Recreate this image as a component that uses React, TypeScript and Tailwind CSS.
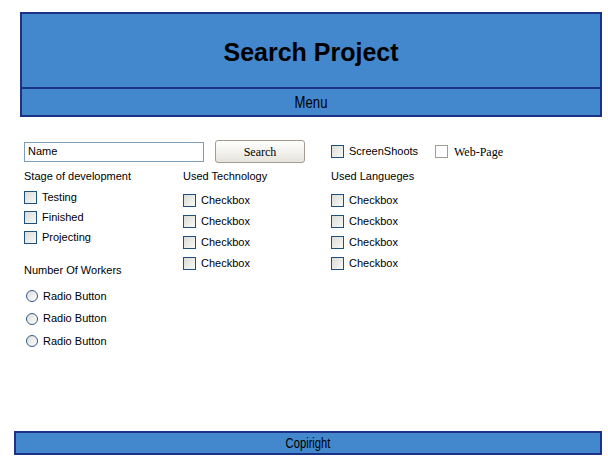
import React from "react";

const SANS = "font-['Liberation_Sans',Arial,sans-serif]";
const SERIF = "font-['Liberation_Serif','Times_New_Roman',serif]";

function Box({ muted }: { muted?: boolean }) {
  return (
    <span
      className={
        "inline-block w-[13px] h-[13px] shrink-0 border " +
        (muted
          ? "border-[#a39d8f] bg-white"
          : "border-[#1c5180] bg-gradient-to-br from-[#dcdcd7] to-[#f8f8f5]")
      }
    />
  );
}

function Check({ label, h = "h-[21px]" }: { label: string; h?: string }) {
  return (
    <div className={"flex items-center gap-[5px] " + h}>
      <Box />
      <span className="text-[11px] text-black leading-none">{label}</span>
    </div>
  );
}

function Radio({ label, h }: { label: string; h: string }) {
  return (
    <div className={"flex items-center gap-[5px] pl-[2px] " + h}>
      <span className="inline-block w-[12px] h-[12px] rounded-full border border-[#2f5d8a] bg-gradient-to-br from-[#dcdcd7] to-white" />
      <span className="text-[11px] text-black leading-none">{label}</span>
    </div>
  );
}

export default function App() {
  return (
    <div className={"w-[608px] h-[467px] flex flex-col bg-white text-black pb-[12px] " + SANS}>
      <header className="ml-[20px] pt-[12px] w-[582px]">
        <div className="border-2 border-[#1b3286] bg-[#4387cc]">
          <div className="h-[73px] pt-[3px] flex items-center justify-center">
            <h1 className="text-[25px] font-bold leading-none">Search Project</h1>
          </div>
          <div className="h-[28px] pt-[2px] border-t-2 border-[#1b3286] flex items-center justify-center">
            <span className="inline-block text-[16px] leading-none scale-x-[0.82]">Menu</span>
          </div>
        </div>
      </header>

      <div className="pl-[24px] mt-[23px]">
        <div className="flex items-center h-[23px]">
          <div className="w-[180px] h-[20px] border border-[#7f9db9] flex items-center px-[3px] text-[11px]">
            Name
          </div>
          <button
            className={
              "ml-[11px] w-[90px] h-[23px] rounded-[3px] border border-[#a49d8f] bg-gradient-to-b from-white to-[#e6e4dc] text-[12px] " +
              SERIF
            }
          >
            Search
          </button>
          <div className="ml-[26px] w-[104px] flex items-center gap-[5px]">
            <Box />
            <span className="text-[11px] leading-none">ScreenShoots</span>
          </div>
          <div className="flex items-center gap-[6px]">
            <Box muted />
            <span className={"text-[12px] leading-none " + SERIF}>Web-Page</span>
          </div>
        </div>

        <div className="flex">
          <div className="w-[159px]">
            <div className="mt-[6px] h-[14px] text-[11px] leading-[14px]">Stage of development</div>
            <div className="mt-[4px]">
              <Check label="Testing" h="h-[20px]" />
              <Check label="Finished" h="h-[20px]" />
              <Check label="Projecting" h="h-[20px]" />
            </div>
            <div className="mt-[16px] h-[14px] text-[11px] leading-[14px]">Number Of Workers</div>
            <div className="mt-[8px]">
              <Radio label="Radio Button" h="h-[22px]" />
              <Radio label="Radio Button" h="h-[23px]" />
              <Radio label="Radio Button" h="h-[22px]" />
            </div>
          </div>

          <div className="w-[148px]">
            <div className="mt-[6px] h-[14px] text-[11px] leading-[14px]">Used Technology</div>
            <div className="mt-[7px]">
              <Check label="Checkbox" />
              <Check label="Checkbox" />
              <Check label="Checkbox" />
              <Check label="Checkbox" />
            </div>
          </div>

          <div className="w-[120px]">
            <div className="mt-[6px] h-[14px] text-[11px] leading-[14px]">Used Langueges</div>
            <div className="mt-[7px]">
              <Check label="Checkbox" />
              <Check label="Checkbox" />
              <Check label="Checkbox" />
              <Check label="Checkbox" />
            </div>
          </div>
        </div>
      </div>

      <footer className="mt-auto ml-[14px] w-[588px] h-[24px] border-2 border-[#1b3286] bg-[#4387cc] flex items-center justify-center">
        <span className="inline-block text-[14px] leading-none scale-x-[0.8]">Copiright</span>
      </footer>
    </div>
  );
}
